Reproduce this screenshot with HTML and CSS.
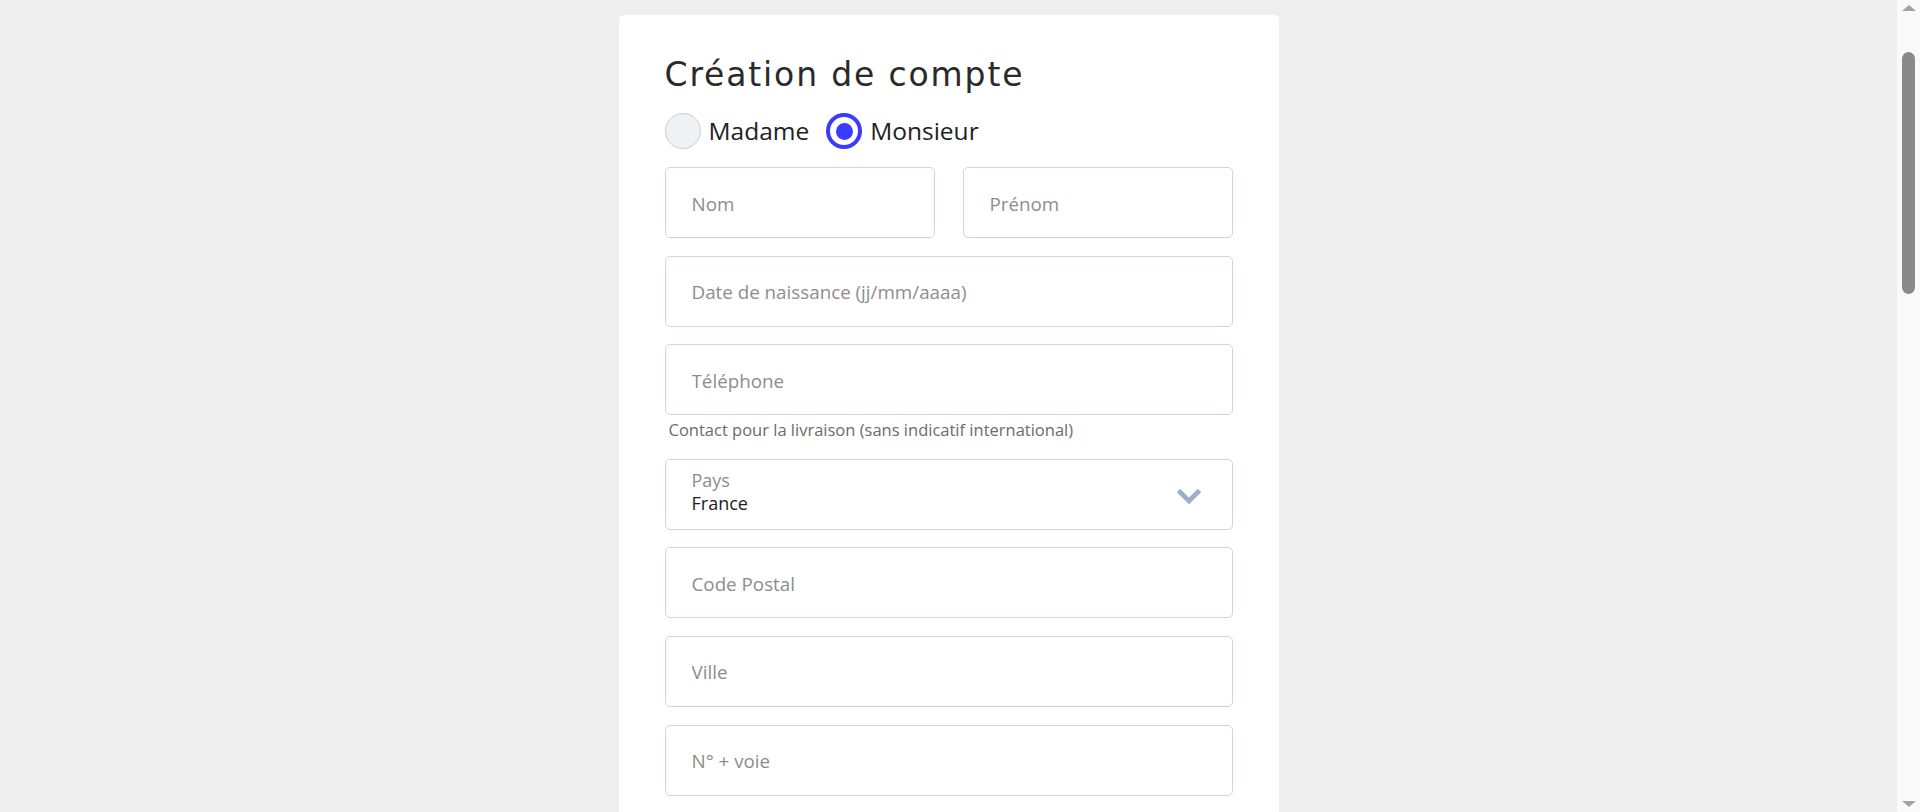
FILE: index.html
```html
<!DOCTYPE html>
<html lang="fr">
<head>
<meta charset="utf-8">
<title>Création de compte</title>
<link rel="stylesheet" href="styles.css">
</head>
<body>
<div class="page">
  <main class="main">
    <form class="card">
      <h1 class="title">Création de compte</h1>
      <div class="radios">
        <label class="radio-option">
          <span class="radio"></span>
          <span class="radio-label">Madame</span>
        </label>
        <label class="radio-option">
          <span class="radio radio-checked"><span class="radio-dot"></span></span>
          <span class="radio-label">Monsieur</span>
        </label>
      </div>
      <div class="fields">
        <div class="row-2">
          <input class="field" type="text" placeholder="Nom">
          <input class="field" type="text" placeholder="Prénom">
        </div>
        <input class="field" type="text" placeholder="Date de naissance (jj/mm/aaaa)">
        <div class="with-help">
          <input class="field" type="text" placeholder="Téléphone">
          <p class="help">Contact pour la livraison (sans indicatif international)</p>
        </div>
        <div class="select">
          <div class="select-text">
            <span class="select-label">Pays</span>
            <span class="select-value">France</span>
          </div>
          <svg class="chevron" width="26" height="17" viewBox="0 0 26 17" aria-hidden="true">
            <path d="M2.5 2.5 L13 13 L23.5 2.5" fill="none" stroke="#9dadcc" stroke-width="4.6"/>
          </svg>
        </div>
        <input class="field" type="text" placeholder="Code Postal">
        <input class="field" type="text" placeholder="Ville">
        <input class="field" type="text" placeholder="N° + voie">
      </div>
    </form>
  </main>
  <div class="scrollbar">
    <span class="sb-arrow sb-up"></span>
    <div class="sb-track">
      <span class="sb-thumb"></span>
    </div>
    <span class="sb-arrow sb-down"></span>
  </div>
</div>
</body>
</html>
```

FILE: styles.css
```css
html, body {
  margin: 0;
  padding: 0;
  height: 100%;
  overflow: hidden;
  background: #eeeeee;
}

.page {
  display: flex;
  height: 812px;
}

.main {
  flex: 1;
  display: flex;
  justify-content: center;
  align-items: flex-start;
  padding-top: 15px;
}

.card {
  width: 660px;
  box-sizing: border-box;
  background: #ffffff;
  border-radius: 5px;
  padding: 40px 46px 60px;
  min-height: 900px;
}

.title {
  margin: 0;
  font-family: "DejaVu Sans", sans-serif;
  font-weight: 400;
  font-size: 33px;
  line-height: 40px;
  letter-spacing: 1.85px;
  color: #2a2a2a;
}

.radios {
  display: flex;
  align-items: center;
  gap: 17px;
  height: 36px;
  margin-top: 18px;
}

.radio-option {
  display: flex;
  align-items: center;
  gap: 8px;
}

.radio {
  width: 36px;
  height: 36px;
  box-sizing: border-box;
  border-radius: 50%;
  border: 1px solid #c4ccd8;
  background: #eff1f4;
  display: flex;
  align-items: center;
  justify-content: center;
}

.radio-checked {
  border: 4px solid #3b3bff;
  background: #ffffff;
}

.radio-dot {
  width: 17px;
  height: 17px;
  border-radius: 50%;
  background: #3b3bff;
}

.radio-label {
  font-family: "Open Sans", sans-serif;
  font-size: 24.5px;
  color: #222222;
  line-height: 36px;
}

.fields {
  display: flex;
  flex-direction: column;
  gap: 17.6px;
  margin-top: 18px;
}

.row-2 {
  display: grid;
  grid-template-columns: 1fr 1fr;
  gap: 28px;
}

.field {
  display: block;
  width: 100%;
  height: 71px;
  box-sizing: border-box;
  margin: 0;
  padding: 2px 26px 0;
  border: 1px solid #cdd6e2;
  border-radius: 5px;
  background: #ffffff;
  font-family: "Open Sans", sans-serif;
  font-size: 18.8px;
  color: #222222;
  outline: none;
}

.field::placeholder {
  color: #8d8d8d;
  opacity: 1;
}

.with-help {
  display: flex;
  flex-direction: column;
}

.help {
  margin: 4px 0 0 4px;
  font-family: "Open Sans", sans-serif;
  font-size: 16.5px;
  line-height: 22px;
  color: #6b6b6b;
}

.select {
  height: 71px;
  box-sizing: border-box;
  border: 1px solid #cdd6e2;
  border-radius: 5px;
  padding: 0 30px 4px 26px;
  display: flex;
  align-items: center;
  justify-content: space-between;
}

.select-text {
  display: flex;
  flex-direction: column;
  font-family: "Open Sans", sans-serif;
  font-size: 18px;
  line-height: 23px;
}

.select-label {
  color: #8d8d8d;
}

.select-value {
  color: #1c1c1c;
}

.chevron {
  display: block;
  margin-top: 8px;
}

.scrollbar {
  width: 23px;
  background: #fafafa;
  display: flex;
  flex-direction: column;
  align-items: center;
}

.sb-arrow {
  width: 0;
  height: 0;
  border-left: 7px solid transparent;
  border-right: 7px solid transparent;
}

.sb-up {
  margin-top: 5px;
  border-bottom: 6px solid #a3a3a3;
}

.sb-down {
  margin-bottom: 5px;
  border-top: 6px solid #a3a3a3;
}

.sb-track {
  flex: 1;
  width: 100%;
  display: flex;
  justify-content: center;
  padding-top: 41px;
}

.sb-thumb {
  width: 13px;
  height: 242px;
  border-radius: 7px;
  background: #8a8a8a;
}
```
